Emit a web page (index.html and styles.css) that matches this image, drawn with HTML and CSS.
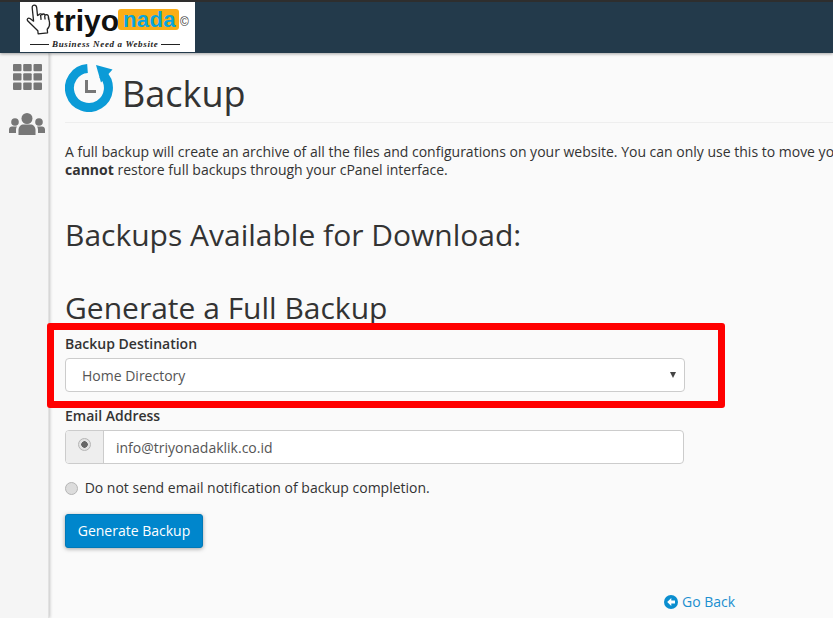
FILE: index.html
```html
<!DOCTYPE html>
<html lang="en">
<head>
<meta charset="utf-8">
<title>Backup</title>
<link rel="stylesheet" href="styles.css">
</head>
<body>
<header class="topbar">
  <div class="logo">
    <div class="logo-row">
      <svg class="logo-hand" viewBox="0 0 28 32" width="28" height="32"><path d="M9.500 1.500c1.600 0 2.400 1.200 2.400 2.800v8l1.200-.5c.6-1.200 2.800-1.200 3.200.2.800-1 2.900-.8 3.200.7 1-.7 3-.3 3.100 1.400l.5 6.400c.2 3.400-1.500 5.200-3 6.500v3.500h-9.500v-3L1.500 16.500c-1-1.500.8-3.500 2.600-2l3.300 3V4.300c0-1.600.7-2.800 2.100-2.800zM15 12v5M19 13v4M22.500 14.500v3" fill="#fff" stroke="#222" stroke-width="1.300" stroke-linejoin="round"/></svg>
      <span class="logo-triyo">triyo</span><span class="logo-nada">nada</span><span class="logo-c">©</span>
    </div>
    <div class="logo-tag"><span class="logo-line"></span><span class="logo-slogan">Business Need a Website</span><span class="logo-line"></span></div>
  </div>
</header>
<div class="shell">
  <aside class="sidebar">
    <svg class="nav-grid" viewBox="0 0 29 26" width="29" height="26"><g fill="#777"><rect x="0" y="0" width="8.500" height="7.300" rx="1"/><rect x="10.200" y="0" width="8.500" height="7.300" rx="1"/><rect x="20.500" y="0" width="8.500" height="7.300" rx="1"/><rect x="0" y="9.300" width="8.500" height="7.300" rx="1"/><rect x="10.200" y="9.300" width="8.500" height="7.300" rx="1"/><rect x="20.500" y="9.300" width="8.500" height="7.300" rx="1"/><rect x="0" y="18.600" width="8.500" height="7.300" rx="1"/><rect x="10.200" y="18.600" width="8.500" height="7.300" rx="1"/><rect x="20.500" y="18.600" width="8.500" height="7.300" rx="1"/></g></svg>
    <svg class="nav-users" viewBox="0 0 36 22" width="36" height="22"><g fill="#777"><circle cx="18" cy="5.500" r="5.500"/><circle cx="6" cy="9" r="3.800"/><circle cx="30" cy="9" r="3.800"/><path d="M9.500 22v-5c0-3.500 2.500-5.500 5-5.500h7c2.500 0 5 2 5 5.500v5z"/><path d="M0 20v-3.500c0-2 1.500-3 3-3h5c-.7 1-1 2-1 3.500v3z"/><path d="M36 20v-3.500c0-2-1.500-3-3-3h-5c.7 1 1 2 1 3.500v3z"/></g></svg>
  </aside>
  <main class="content">
    <div class="page-title">
      <svg class="title-icon" viewBox="0 0 48 48" width="48" height="48"><path d="M22.500 4.560A19.500 19.500 0 1 0 37.500 10" fill="none" stroke="#0b9bd7" stroke-width="9"/><path d="M31 1l16.500 4.500L36 18.500z" fill="#0b9bd7"/><path d="M20 16h3v10h8v3H20z" fill="#777"/></svg>
      <h1>Backup</h1>
    </div>
    <p class="intro">A full backup will create an archive of all the files and configurations on your website. You can only use this to move your account to another server, or to keep a local copy of your files. You<br><strong>cannot</strong> restore full backups through your cPanel interface.</p>
    <h2 class="h-download">Backups Available for Download:</h2>
    <h2 class="h-generate">Generate a Full Backup</h2>
    <form class="backup-form">
      <label class="field-label">Backup Destination</label>
      <div class="select-box"><span>Home Directory</span><i class="caret"></i></div>
      <label class="field-label label-email">Email Address</label>
      <div class="input-group">
        <span class="addon"><input type="radio" class="radio radio-on" checked></span>
        <span class="input-text">info@triyonadaklik.co.id</span>
      </div>
      <label class="check-row"><input type="radio" class="radio plain-radio"> Do not send email notification of backup completion.</label>
      <button type="button" class="btn">Generate Backup</button>
    </form>
    <a class="back-link" href="#"><svg viewBox="0 0 14 14" width="14" height="14"><circle cx="7" cy="7" r="7" fill="#0b8ecf"/><path d="M7.300 3L3.200 7l4.100 4V8.500H11v-3H7.300z" fill="#fff"/></svg>Go Back</a>
  </main>
</div>
<div class="highlight"></div>
</body>
</html>
```
FILE: styles.css
```css
* { box-sizing: border-box; }
html, body { margin: 0; padding: 0; height: 100%; overflow: hidden; }
body { width: 833px; height: 618px; background: #fafafa; color: #333; font-family: "Open Sans", sans-serif; font-size: 14px; position: relative; }

.topbar { height: 53px; background: #233a4b; border-top: 2px solid #2e2e2e; padding-left: 20px; box-shadow: 0 1px 3px rgba(0,0,0,.35); position: relative; z-index: 2; }
.logo { width: 175px; height: 50px; background: #fff; padding: 2px 0 0 6px; }
.logo-row { display: flex; align-items: center; height: 30px; }
.logo-hand { flex: none; transform: rotate(-6deg); }
.logo-triyo { font-family: "Liberation Sans", sans-serif; font-weight: 700; font-size: 30px; line-height: 30px; color: #111; margin: 3px 0 0 0; }
.logo-nada { font-family: "Liberation Sans", sans-serif; font-weight: 700; font-size: 22px; line-height: 21px; color: #0aa5dd; background: #fbae17; border-radius: 3px; padding: 0 5px; width: 61px; margin: 1px 0 0 -1px; letter-spacing: .4px; }
.logo-c { font-family: "Liberation Sans", sans-serif; font-size: 12px; color: #333; margin-left: 1px; margin-top: 6px; }
.logo-tag { display: flex; align-items: center; gap: 3px; padding-left: 4px; margin-top: 6px; }
.logo-line { width: 19px; height: 1px; background: #222; }
.logo-slogan { font-family: "Liberation Serif", serif; font-style: italic; font-weight: 700; font-size: 9px; line-height: 9px; color: #222; letter-spacing: .65px; white-space: nowrap; }

.shell { display: flex; height: 565px; }
.sidebar { width: 49px; flex: none; background: #f5f5f5; border-right: 1px solid #e2e2e2; box-shadow: 1px 0 3px rgba(0,0,0,.22); display: flex; flex-direction: column; align-items: center; padding-top: 11px; }
.nav-grid { margin-left: 6px; }
.nav-users { margin: 23px 0 0 6px; }

.content { width: 784px; flex: none; padding: 0 0 0 16px; position: relative; }
.page-title { display: flex; align-items: center; height: 70px; border-bottom: 1px solid #eee; padding-top: 1px; }
.title-icon { flex: none; }
h1 { margin: 0 0 0 9px; font-weight: 400; font-size: 36px; line-height: 50px; color: #333; padding-top: 12px; }
.intro { white-space: nowrap; margin: 20px 0 0; line-height: 18px; }
h2 { font-weight: 400; font-size: 30px; line-height: 36px; margin: 0; color: #333; }
.h-download { margin-top: 38px; }
.h-generate { margin-top: 37px; }

.backup-form { width: 620px; }
.field-label { display: block; font-weight: 600; line-height: 18px; }
.backup-form > .field-label:first-child { margin-top: 9px; }
.select-box { display: flex; align-items: center; justify-content: space-between; width: 620px; height: 34px; margin-top: 5px; background: #fff; border: 1px solid #ccc; border-radius: 4px; padding: 0 8px 0 16px; color: #555; }
.caret { width: 0; height: 0; border-left: 3px solid transparent; border-right: 3px solid transparent; border-top: 6px solid #444; margin-top: -1px; }
.label-email { margin-top: 15px; }
.input-group { display: flex; width: 619px; height: 34px; margin-top: 5px; border: 1px solid #ccc; border-radius: 4px; overflow: hidden; background: #fff; color: #555; }
.addon { width: 38px; flex: none; background: #eee; border-right: 1px solid #ccc; display: flex; justify-content: center; padding-top: 7px; }
.radio { appearance: none; -webkit-appearance: none; display: block; margin: 0; width: 13px; height: 13px; flex: none; border-radius: 50%; border: 1px solid #b5b5b5; background: #dcdcdc; }
.radio-on { background: radial-gradient(circle, #666 0 3px, #e2e2e2 3.500px); }
.input-text { padding-left: 12px; line-height: 33px; }
.check-row { display: flex; align-items: center; margin-top: 14px; line-height: 20px; color: #333; white-space: pre; }
.plain-radio { margin: 1px 3px 0 0; }
.btn { display: block; width: 138px; height: 34px; margin-top: 16px; padding: 0 0 2px; background: #0086cc; border: 1px solid #0079b8; border-radius: 3px; color: #fff; font: 14px "Open Sans", sans-serif; box-shadow: 0 1px 4px rgba(0,0,0,.35); }
.back-link { position: absolute; left: 615px; top: 539px; display: flex; align-items: center; gap: 4px; color: #1b8fd0; text-decoration: none; line-height: 20px; }

.highlight { position: absolute; left: 47px; top: 323px; width: 678px; height: 85px; border: 7px solid #f00; border-radius: 3px; z-index: 3; }
```
